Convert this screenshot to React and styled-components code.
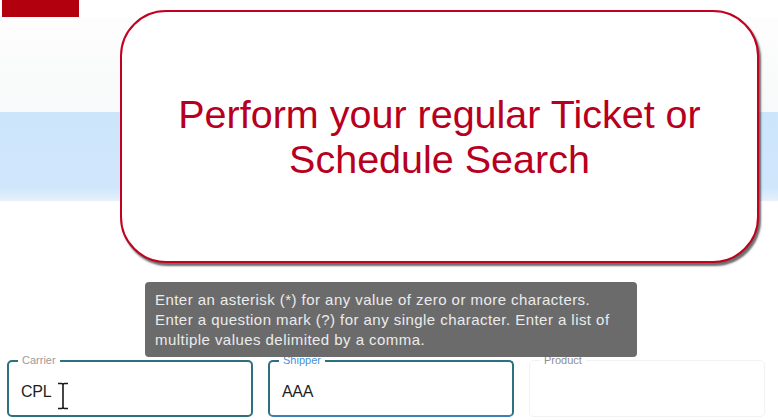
import React from "react";
import styled, { createGlobalStyle } from "styled-components";

const Global = createGlobalStyle`
  html, body { margin: 0; padding: 0; background: #ffffff; }
  body { font-family: "Liberation Sans", Arial, sans-serif; overflow: hidden; }
  * { box-sizing: border-box; }
`;

const Page = styled.div`
  position: relative;
  width: 778px;
  height: 420px;
  overflow: hidden;
  background: #ffffff;
  display: flex;
  flex-direction: column;
`;

const Header = styled.div`
  height: 17px;
  padding-left: 2px;
  display: flex;
`;

const Logo = styled.div`
  width: 77px;
  height: 17px;
  background: #b3000f;
`;

const Hero = styled.div`
  height: 95px;
  background: linear-gradient(180deg, #fdfdfd 0%, #f8f9fa 100%);
`;

const Band = styled.div`
  height: 89px;
  background: linear-gradient(180deg, #cde5fb 0%, #cfe6fb 85%, #e6f1fb 100%);
`;

const Spacer = styled.div`
  height: 154px;
  background: #ffffff;
`;

const FieldRow = styled.div`
  display: flex;
  gap: 15px;
  padding-left: 7px;
`;

const Field = styled.fieldset`
  margin: 0;
  width: ${(p) => p.$w}px;
  height: 62px;
  padding: 0 12px;
  border: ${(p) => (p.$faint ? "1px solid #f1f2f3" : "2px solid #2d7080")};
  border-bottom-color: ${(p) => (p.$faint ? "#f1f2f3" : p.$blueBottom ? "#3c7fb3" : "#2d7080")};
  border-radius: 5px;
  display: flex;
  align-items: center;
`;

const Legend = styled.legend`
  margin-left: ${(p) => (p.$plain ? "-2px" : "-3px")};
  padding: 0 4px;
  font-size: 11px;
  line-height: 11px;
  color: ${(p) => p.$color};
`;

const Value = styled.span`
  font-size: 16px;
  color: #1e1e1e;
  margin-top: 2px;
  letter-spacing: -0.3px;
`;

const Callout = styled.div`
  position: absolute;
  left: 120px;
  top: 10px;
  width: 639px;
  height: 253px;
  border: 2px solid #c2001f;
  border-radius: 46px;
  background: #ffffff;
  box-shadow: 2px 3px 2px rgba(60, 60, 60, 0.75);
  display: flex;
  align-items: center;
  justify-content: center;
  text-align: center;
`;

const CalloutText = styled.p`
  margin: 0;
  font-size: 39.5px;
  line-height: 45px;
  color: #b8001e;
`;

const Tooltip = styled.div`
  position: absolute;
  left: 145px;
  top: 282px;
  width: 492px;
  height: 75px;
  padding: 8px 10px;
  background: #6b6b6b;
  border-radius: 4px;
  color: #ececec;
  font-size: 15px;
  letter-spacing: 0.45px;
  line-height: 20px;
  z-index: 2;
`;

const TipLine = styled.span`
  display: block;
  white-space: nowrap;
`;

const Cursor = styled.svg`
  position: absolute;
  left: 56px;
  top: 382px;
  z-index: 3;
`;

export default function App() {
  return (
    <Page>
      <Global />
      <Header>
        <Logo />
      </Header>
      <Hero />
      <Band />
      <Spacer />
      <FieldRow>
        <Field $w={246}>
          <Legend $color="#9b9b9b">Carrier</Legend>
          <Value>CPL</Value>
        </Field>
        <Field $w={246} $blueBottom>
          <Legend $color="#4a90d9">Shipper</Legend>
          <Value>AAA</Value>
        </Field>
        <Field $w={236} $faint>
          <Legend $color="#8d8d8d" $plain>Product</Legend>
        </Field>
      </FieldRow>

      <Callout>
        <CalloutText>
          Perform your regular Ticket or
          <br />
          Schedule Search
        </CalloutText>
      </Callout>

      <Tooltip>
        <TipLine>Enter an asterisk (*) for any value of zero or more characters.</TipLine>
        <TipLine>Enter a question mark (?) for any single character. Enter a list of</TipLine>
        <TipLine>multiple values delimited by a comma.</TipLine>
      </Tooltip>

      <Cursor width="14" height="28" viewBox="0 0 14 28">
        <path d="M2 1.5 H5.5 Q7 1.5 7 3 Q7 1.5 8.5 1.5 H12 M7 3 V25 M2 26.5 H5.5 Q7 26.5 7 25 Q7 26.5 8.5 26.5 H12" fill="none" stroke="#ffffff" strokeWidth="3.2" />
        <path d="M2 1.5 H5.5 Q7 1.5 7 3 Q7 1.5 8.5 1.5 H12 M7 3 V25 M2 26.5 H5.5 Q7 26.5 7 25 Q7 26.5 8.5 26.5 H12" fill="none" stroke="#1a1a1a" strokeWidth="1.6" />
      </Cursor>
    </Page>
  );
}
